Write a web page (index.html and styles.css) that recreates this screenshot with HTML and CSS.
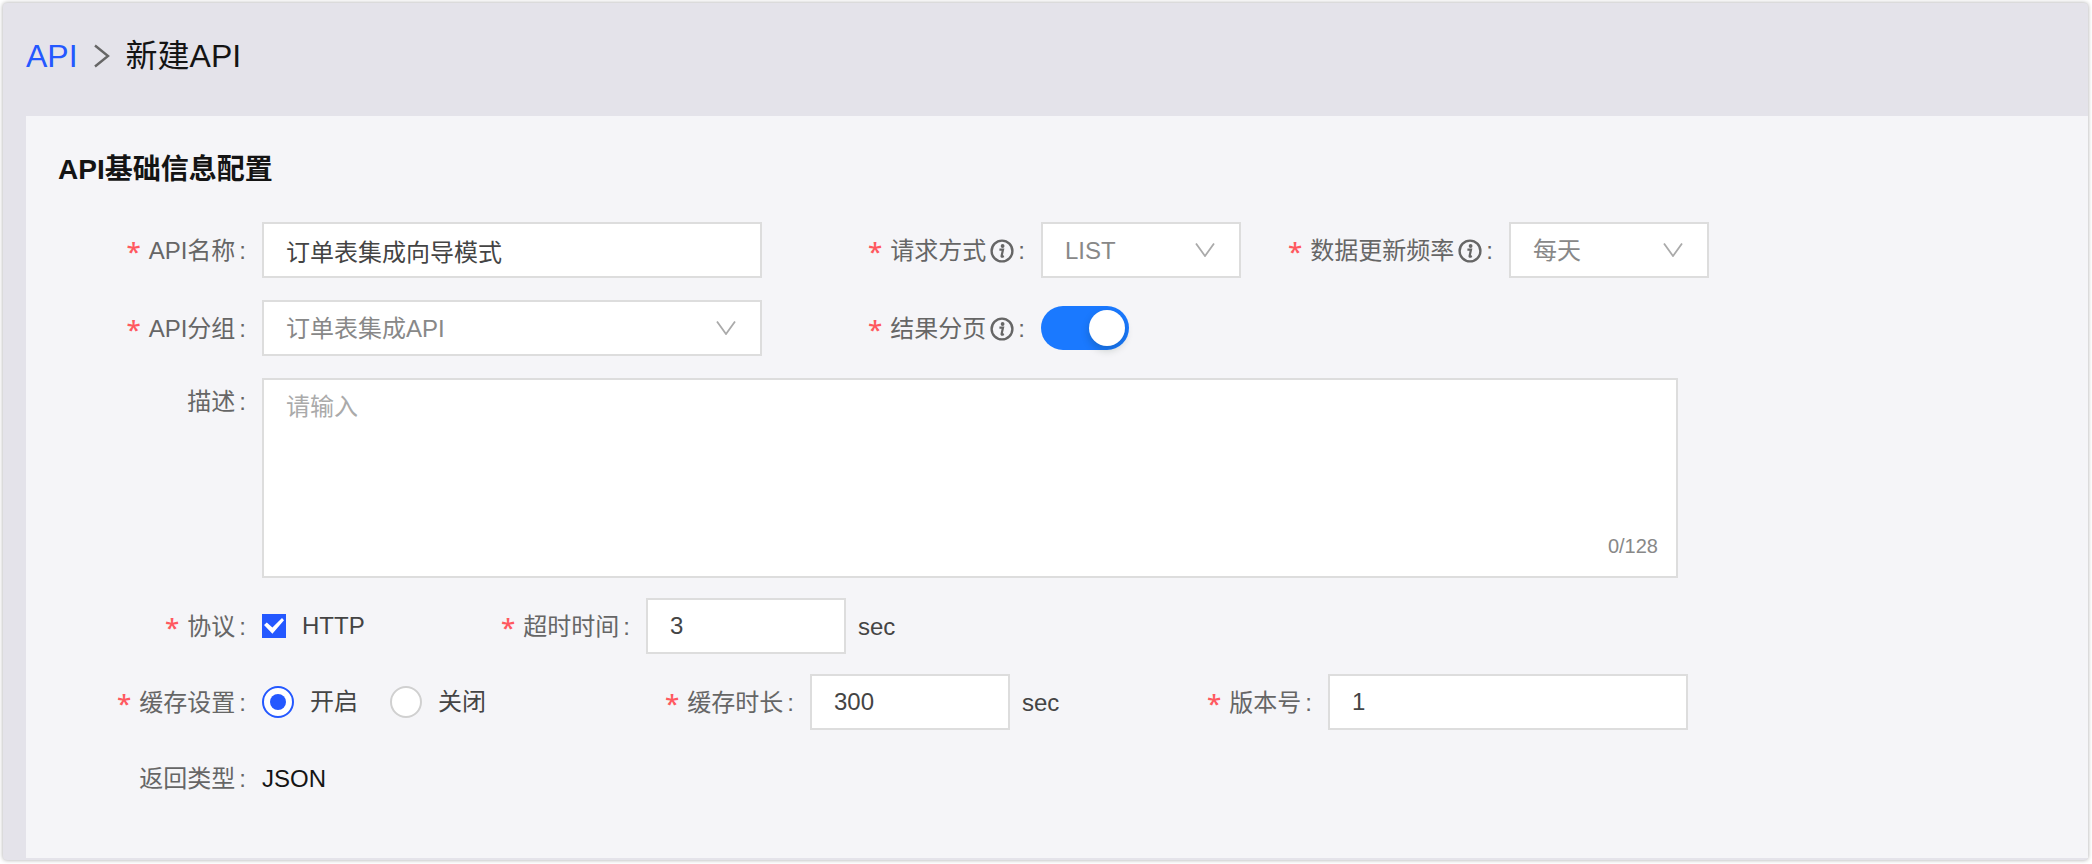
FILE: index.html
```html
<!DOCTYPE html>
<html lang="zh-CN">
<head>
<meta charset="utf-8">
<title>新建API</title>
<link rel="stylesheet" href="styles.css">
</head>
<body>
<svg class="sprite" aria-hidden="true">
  <symbol id="info" viewBox="0 0 24 24">
    <circle cx="12" cy="12" r="10.4" fill="none" stroke="currentColor" stroke-width="2.4"/>
    <circle cx="12.6" cy="7" r="1.9" fill="currentColor"/>
    <path d="M9.4 10.6h3.6l-1.4 6.4q-.2 1 .9.7l1.3-.7" fill="none" stroke="currentColor" stroke-width="2.2"/>
  </symbol>
  <symbol id="down" viewBox="0 0 20 14">
    <path d="M1 0.5L10 13L19 0.5" fill="none" stroke="currentColor" stroke-width="1.8"/>
  </symbol>
</svg>
<div class="app">
  <nav class="breadcrumb" aria-label="面包屑">
    <a href="#">API</a>
    <svg class="separator" viewBox="0 0 16 24" aria-hidden="true"><path d="M1 1.5L14 12L1 22.5" fill="none" stroke="currentColor" stroke-width="2.4"/></svg>
    <span>新建API</span>
  </nav>
  <main class="panel">
    <h1 class="title">API基础信息配置</h1>
    <form class="form">
      <div class="group">
        <div class="row row-main">
          <label class="label required" for="name">API名称<span class="colon">:</span></label>
          <input class="control" id="name" type="text" value="订单表集成向导模式">
          <label class="label required" for="method">请求方式<svg class="info"><use href="#info"/></svg><span class="colon">:</span></label>
          <div class="select">
            <select class="control" id="method"><option>LIST</option></select>
            <svg class="arrow" aria-hidden="true"><use href="#down"/></svg>
          </div>
          <label class="label required" for="freq">数据更新频率<svg class="info"><use href="#info"/></svg><span class="colon">:</span></label>
          <div class="select">
            <select class="control" id="freq"><option>每天</option></select>
            <svg class="arrow" aria-hidden="true"><use href="#down"/></svg>
          </div>
        </div>
        <div class="row row-main">
          <label class="label required" for="group">API分组<span class="colon">:</span></label>
          <div class="select">
            <select class="control" id="group"><option>订单表集成API</option></select>
            <svg class="arrow" aria-hidden="true"><use href="#down"/></svg>
          </div>
          <label class="label required" for="paging">结果分页<svg class="info"><use href="#info"/></svg><span class="colon">:</span></label>
          <input class="switch" id="paging" type="checkbox" role="switch" checked>
        </div>
        <div class="row row-desc">
          <label class="label label-top" for="desc">描述<span class="colon">:</span></label>
          <div class="area">
            <textarea class="control" id="desc" maxlength="128" placeholder="请输入"></textarea>
            <span class="count">0/128</span>
          </div>
        </div>
      </div>
      <div class="row row-protocol">
        <span class="label required">协议<span class="colon">:</span></span>
        <label class="choice"><input class="check" type="checkbox" checked>HTTP</label>
        <label class="label required" for="timeout">超时时间<span class="colon">:</span></label>
        <input class="control" id="timeout" type="text" value="3">
        <span class="unit">sec</span>
      </div>
      <div class="row row-cache">
        <span class="label required">缓存设置<span class="colon">:</span></span>
        <div class="choices">
          <label class="choice"><input class="radio" type="radio" name="cache" checked>开启</label>
          <label class="choice"><input class="radio" type="radio" name="cache">关闭</label>
        </div>
        <label class="label required" for="ttl">缓存时长<span class="colon">:</span></label>
        <input class="control" id="ttl" type="text" value="300">
        <span class="unit">sec</span>
        <label class="label required" for="version">版本号<span class="colon">:</span></label>
        <input class="control" id="version" type="text" value="1">
      </div>
      <div class="row row-desc">
        <span class="label">返回类型<span class="colon">:</span></span>
        <span class="value">JSON</span>
      </div>
    </form>
  </main>
</div>
</body>
</html>
```
FILE: styles.css
```css
* {
  box-sizing: border-box;
}

body {
  margin: 0;
  padding: 3px 4px 4px 3px;
  background: #fff;
  color: #444;
  font: 24px/36px "Liberation Sans", "Noto Sans CJK SC", sans-serif;
}

.sprite {
  display: none;
}

.app {
  display: flex;
  flex-direction: column;
  min-height: calc(100vh - 7px);
  padding: 0 0 2px 23px;
  border-radius: 4px;
  background: #e4e3ea;
  box-shadow: 0 0 4px rgba(0, 0, 0, 0.35);
}

.breadcrumb {
  display: flex;
  align-items: center;
  gap: 16px;
  height: 113px;
  padding-bottom: 8px;
  color: #141414;
  font-size: 32px;
  line-height: 48px;
}

.breadcrumb a {
  color: #2458ff;
  text-decoration: none;
}

.separator {
  width: 16px;
  height: 24px;
  color: #666;
}

.panel {
  flex: 1;
  padding: 32px;
  background: #f5f5f8;
}

.title {
  margin: 0 0 30px;
  color: #141414;
  font-size: 28px;
  font-weight: 700;
  line-height: 44px;
}

.form,
.group {
  display: flex;
  flex-direction: column;
  gap: 20px;
}

.group {
  gap: 22px;
}

.row {
  display: grid;
  align-items: center;
  min-height: 56px;
}

.row-main {
  grid-template-columns: 204px 500fr 279px 200fr 268px 200fr 347fr;
}

.row-desc {
  grid-template-columns: 204px 1416fr 378fr;
}

.row-protocol {
  grid-template-columns: 204px 180fr 204px 200fr 1210fr;
}

.row-cache {
  grid-template-columns: 204px 344fr 204px 200fr 114fr 204px 360fr 368fr;
}

.label {
  display: flex;
  align-items: center;
  justify-content: flex-end;
  color: #666;
  white-space: nowrap;
}

.label,
.unit,
.value {
  padding-top: 2px;
}

.label-top {
  align-self: start;
  line-height: 44px;
}

.required::before {
  content: "*";
  margin-right: 8px;
  color: #ff5960;
  font-family: "Noto Sans", sans-serif;
  font-size: 26px;
  font-weight: 500;
}

.info {
  width: 24px;
  height: 24px;
  margin-left: 4px;
}

.colon {
  margin: 0 16px 0 4px;
}

.control {
  display: block;
  width: 100%;
  min-width: 0;
  height: 56px;
  margin: 0;
  padding: 0 22px;
  border: 2px solid #ddd;
  border-radius: 0;
  outline: 0;
  background: #fff;
  color: #444;
  font: inherit;
  appearance: none;
}

.select,
.area {
  position: relative;
}

.select .control {
  padding-top: 2px;
  color: #888;
}

.arrow {
  position: absolute;
  top: 21px;
  right: 26px;
  width: 20px;
  height: 14px;
  color: #aaa;
  pointer-events: none;
}

.area .control {
  height: 200px;
  padding: 9px 22px;
  resize: none;
}

.area .control::placeholder {
  color: #aaa;
}

.count {
  position: absolute;
  right: 20px;
  bottom: 18px;
  color: #888;
  font-size: 20px;
  line-height: 28px;
}

.switch {
  display: flex;
  align-items: center;
  justify-content: flex-end;
  width: 88px;
  height: 44px;
  margin: 0;
  padding: 4px;
  border-radius: 22px;
  background: #1a79ff;
  appearance: none;
}

.switch::before {
  content: "";
  width: 36px;
  height: 36px;
  border-radius: 50%;
  background: #fff;
  box-shadow: 0 4px 8px rgba(0, 35, 11, 0.2);
}

.choices {
  display: flex;
  gap: 32px;
}

.choice {
  display: flex;
  align-items: center;
  gap: 16px;
  white-space: nowrap;
}

.check,
.radio {
  display: grid;
  flex: none;
  place-items: center;
  margin: 0;
  appearance: none;
}

.check {
  width: 24px;
  height: 24px;
  background: #2458ff;
}

.check::before {
  content: "";
  width: 20px;
  height: 16px;
  background: #fff;
  clip-path: polygon(0 44%, 14% 28%, 42% 60%, 90% 0, 100% 14%, 42% 98%);
}

.radio {
  width: 32px;
  height: 32px;
  border: 2px solid #d0d0d0;
  border-radius: 50%;
  background: #fff;
}

.radio:checked {
  border-color: #2458ff;
}

.radio:checked::before {
  content: "";
  width: 16px;
  height: 16px;
  border-radius: 50%;
  background: #2458ff;
}

.unit {
  padding-left: 12px;
}

.value {
  color: #141414;
}
```
